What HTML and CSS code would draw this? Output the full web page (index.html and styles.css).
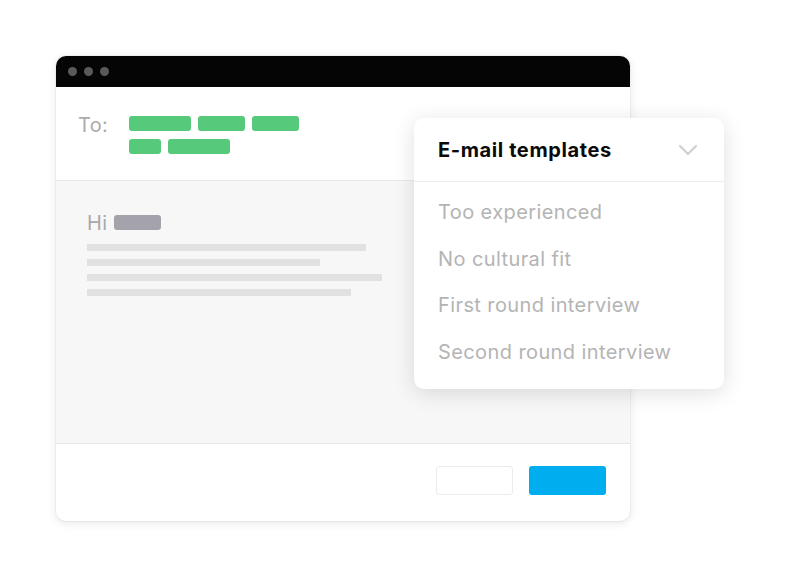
FILE: index.html
```html
<!DOCTYPE html>
<html>
<head>
<meta charset="utf-8">
<link rel="stylesheet" href="styles.css">
</head>
<body>
<div class="stage">
  <div class="window">
    <div class="titlebar">
      <span class="dot"></span><span class="dot"></span><span class="dot"></span>
    </div>
    <div class="header">
      <div class="to">To:</div>
      <div class="pills">
        <div class="pill-row">
          <span class="pill w62"></span><span class="pill w47"></span><span class="pill w47"></span>
        </div>
        <div class="pill-row">
          <span class="pill w32"></span><span class="pill w62"></span>
        </div>
      </div>
    </div>
    <div class="body">
      <div class="greet"><span class="hi">Hi</span><span class="name"></span></div>
      <div class="lines">
        <span class="line l1"></span>
        <span class="line l2"></span>
        <span class="line l3"></span>
        <span class="line l4"></span>
      </div>
    </div>
    <div class="footer">
      <span class="btn btn-outline"></span>
      <span class="btn btn-primary"></span>
    </div>
  </div>
  <div class="dropdown">
    <div class="dd-head">
      <span class="dd-title">E-mail templates</span>
      <svg class="chev" width="20" height="12" viewBox="0 0 20 12"><path d="M2 2 L10 10 L18 2" fill="none" stroke="#cfcfcf" stroke-width="2.2" stroke-linecap="round" stroke-linejoin="round"/></svg>
    </div>
    <ul class="dd-list">
      <li>Too experienced</li>
      <li>No cultural fit</li>
      <li>First round interview</li>
      <li>Second round interview</li>
    </ul>
  </div>
</div>
</body>
</html>
```
FILE: styles.css
```css
html, body {
  margin: 0;
  padding: 0;
  background: #ffffff;
  font-family: Inter, "Liberation Sans", sans-serif;
}
.stage {
  position: relative;
  width: 800px;
  height: 577px;
  padding: 56px 0 0 56px;
  box-sizing: border-box;
}
.window {
  width: 574px;
  height: 465px;
  border-radius: 10px;
  background: #fff;
  box-shadow: 0 2px 10px rgba(0,0,0,0.10), 0 0 0 1px rgba(0,0,0,0.03);
  display: flex;
  flex-direction: column;
  overflow: hidden;
}
.titlebar {
  height: 31px;
  background: #050505;
  display: flex;
  align-items: center;
  gap: 7px;
  padding-left: 12px;
  flex: none;
}
.dot {
  width: 9px;
  height: 9px;
  border-radius: 50%;
  background: #5a5a5a;
}
.header {
  height: 94px;
  border-bottom: 1px solid #e9e9e9;
  display: flex;
  padding: 29px 0 0 22px;
  box-sizing: border-box;
  flex: none;
}
.to {
  font-size: 20px;
  color: #ababab;
  width: 51px;
  line-height: 16px;
  margin-top: 1px;
  letter-spacing: 0.3px;
}
.pills {
  display: flex;
  flex-direction: column;
  gap: 8px;
}
.pill-row {
  display: flex;
  gap: 7px;
}
.pill {
  height: 15px;
  border-radius: 3px;
  background: #56c97a;
}
.w62 { width: 62px; }
.w47 { width: 47px; }
.w32 { width: 32px; }
.body {
  flex: 1;
  background: #f7f7f7;
  border-bottom: 1px solid #e6e6e6;
  padding: 33px 0 0 31px;
}
.greet {
  display: flex;
  align-items: center;
  gap: 7px;
  height: 17px;
}
.hi {
  font-size: 20px;
  color: #a9a9a9;
  line-height: 17px;
  letter-spacing: 0.3px;
  position: relative;
  top: 1px;
}
.name {
  width: 47px;
  height: 15px;
  border-radius: 3px;
  background: #a4a3ab;
}
.lines {
  margin-top: 13px;
  display: flex;
  flex-direction: column;
  gap: 8px;
}
.line {
  height: 7px;
  background: #e1e1e1;
  display: block;
}
.l1 { width: 279px; }
.l2 { width: 233px; }
.l3 { width: 295px; }
.l4 { width: 264px; }
.footer {
  height: 77px;
  flex: none;
  display: flex;
  justify-content: flex-end;
  gap: 16px;
  padding: 22px 24px 0 0;
  box-sizing: border-box;
}
.btn {
  width: 77px;
  height: 29px;
  border-radius: 3px;
  box-sizing: border-box;
}
.btn-outline {
  border: 1px solid #ececec;
  background: #fff;
}
.btn-primary {
  background: #00aeef;
}
.dropdown {
  position: absolute;
  left: 414px;
  top: 118px;
  width: 310px;
  height: 271px;
  background: #fff;
  border-radius: 10px;
  box-shadow: 0 4px 22px rgba(0,0,0,0.13);
}
.dd-head {
  height: 63px;
  border-bottom: 1px solid #ececec;
  display: flex;
  align-items: center;
  justify-content: space-between;
  padding: 0 26px 0 24px;
}
.dd-title {
  font-size: 20px;
  font-weight: 700;
  color: #0a0a0a;
  letter-spacing: 0.6px;
}
.chev { display: block; }
.dd-list {
  list-style: none;
  margin: 0;
  padding: 14px 0 0 24px;
}
.dd-list li {
  font-size: 20px;
  color: #b4b4b4;
  height: 46.5px;
  line-height: 32px;
  letter-spacing: 0.4px;
}
```
